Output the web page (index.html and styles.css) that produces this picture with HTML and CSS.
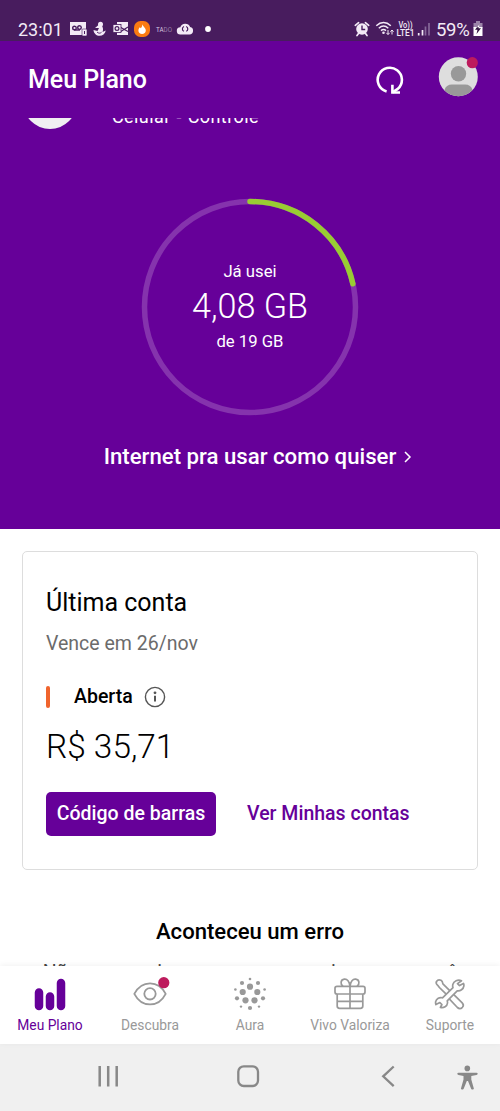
FILE: index.html
```html
<!DOCTYPE html>
<html lang="pt-BR">
<head>
<meta charset="utf-8">
<meta name="viewport" content="width=device-width, initial-scale=1">
<title>Meu Plano</title>
<link rel="stylesheet" href="styles.css">
</head>
<body>
<div class="phone">
  <div class="statusbar">
    <div class="status-left">
      <span class="clock">23:01</span>
      <svg class="notif-icons" width="144" height="20" viewBox="69 19 144 20">
        <!-- voicemail -->
        <path d="M70 22h16v8h-3v5H70z" fill="#f3eaf6"/>
        <g fill="none" stroke="#481c5e" stroke-width="1.4"><circle cx="74.5" cy="28" r="1.8"/><circle cx="79.5" cy="27.6" r="1.8"/><path d="M74 30h6"/></g>
        <rect x="82" y="29" width="5" height="7" rx="1" fill="#f3eaf6" stroke="#481c5e" stroke-width=".6"/><path d="M84.5 31v3" stroke="#481c5e"/>
        <!-- figure -->
        <circle cx="100.500" cy="24.300" r="2.500" fill="#f3eaf6"/>
        <path d="M98.500 25L95 28h4l-1.500 3L93.500 30c.2 3.500 3 5.800 6 5.800 3.200 0 5.500-1.800 6.300-5.300l-3.300 1.500c1-2.400.5-4.500-.5-6z" fill="#f3eaf6"/>
        <path d="M97 32c1.500 1.500 3 1.500 4.500.3" fill="none" stroke="#481c5e" stroke-width=".9"/>
        <!-- mail -->
        <path d="M117 22h11v13h-11z" fill="#f3eaf6"/><path d="M120 27l8 4.500M128 27l-8 5" stroke="#481c5e" stroke-width="1.200"/>
        <rect x="113" y="24.500" width="8" height="8" fill="#f3eaf6" stroke="#481c5e" stroke-width=".8"/><circle cx="117" cy="28.500" r="1.900" fill="none" stroke="#481c5e" stroke-width="1.200"/>
        <!-- flame -->
        <rect x="134" y="21" width="16" height="16" rx="6.500" fill="#fa7b11"/>
        <path d="M142.400 24.300c.4 2.200 3.400 3.500 3.400 6.200 0 2-1.600 3.500-3.700 3.500-2.100 0-3.700-1.400-3.700-3.400 0-1.700.9-2.500 1.500-3.300l.9 1c.9-.9 1.400-2 1.600-4z" fill="#fff"/>
        <text x="156" y="31.500" class="tado" textLength="16" lengthAdjust="spacingAndGlyphs">TA<tspan class="dim">DO</tspan></text>
        <!-- cloud sync -->
        <path d="M180.500 34.500a3.600 3.600 0 0 1-.2-7.200 5.200 5.200 0 0 1 9.800-.3 3.800 3.800 0 0 1-.6 7.500z" fill="#f3eaf6"/>
        <path d="M184 26.500a2.600 2.600 0 0 0 0 4.800M186.200 31.300a2.600 2.600 0 0 0 0-4.800" fill="none" stroke="#481c5e" stroke-width="1.200"/>
        <circle cx="208" cy="29" r="2.900" fill="#fff"/>
      </svg>
    </div>
    <div class="status-right">
      <svg width="77" height="20" viewBox="354 19 77 20">
        <!-- alarm -->
        <circle cx="362" cy="29" r="5.800" fill="#f3eaf6"/>
        <path d="M362 25.500v4h3.200" fill="none" stroke="#481c5e" stroke-width="1.400"/>
        <path d="M355.300 25.300l3.300-2.600M368.700 25.300l-3.300-2.600M358.500 33.500l-1.500 2M365.500 33.500l1.500 2" stroke="#f3eaf6" stroke-width="1.700" stroke-linecap="round"/>
        <!-- wifi -->
        <g fill="none" stroke="#f3eaf6" stroke-width="1.500"><path d="M376.300 25.800c4.500-4.300 10-4.300 14.500 0M378.800 28.300c3-2.800 6.500-2.800 9.500 0M381 30.600c1.500-1.400 3.500-1.400 5 0"/></g>
        <circle cx="383.500" cy="32.700" r="1.300" fill="#f3eaf6"/>
        <path d="M388 30v4.500m-1.700-1.700l1.700 1.700 1.700-1.700M392 34.500V30m-1.600 1.700L392 30l1.600 1.700" fill="none" stroke="#f3eaf6" stroke-width="1"/>
        <text x="398.500" y="28.300" class="lte" textLength="14" lengthAdjust="spacingAndGlyphs">Vo))</text>
        <text x="396.500" y="36.200" class="lte" textLength="18" lengthAdjust="spacingAndGlyphs">LTE1</text>
        <path d="M418.700 33v2.500M422.500 30v5.500" stroke="#f3eaf6" stroke-width="1.700"/>
        <path d="M425.500 26.500v9M429 23v12.500" stroke="#866799" stroke-width="1.700"/>
      </svg>
      <span class="battery-text">59%</span>
      <svg width="10" height="16" viewBox="0 0 10 16">
        <path d="M3 0h4v2h2.500v5H.5V2H3z" fill="#9b83a8"/><path d="M.5 6h9v9h-9z" fill="#fff"/>
        <path d="M6.500 3L2 8.700h2.500L3.500 13 8 7.300H5.500z" fill="#31133f"/><path d="M6.500 3L4 6.200h2L6.500 3z" fill="#fff"/>
      </svg>
    </div>
  </div>

  <header class="header">
    <h1>Meu Plano</h1>
    <svg class="refresh" width="30" height="30" viewBox="375 65 30 30" fill="none" stroke="#fff" stroke-width="2.600">
      <path d="M386.600 91.500A12.100 12.100 0 1 1 397.800 88.900L392.400 92.300" /><path d="M392.400 84.800v7.700h7.600"/>
    </svg>
    <svg class="avatar" width="42" height="42" viewBox="437 56 42 42">
      <clipPath id="face"><circle cx="458.300" cy="76.800" r="19.500"/></clipPath>
      <circle cx="458.300" cy="76.800" r="19.500" fill="#dedede"/>
      <g clip-path="url(#face)" fill="#999"><circle cx="458.500" cy="73.700" r="7.700"/><path d="M444.500 97v-7q1.500-5.500 7.500-5.500h13q6 0 7.500 5.500v7z"/></g>
      <circle cx="472.300" cy="62.700" r="5.600" fill="#bd1b5d"/>
    </svg>
  </header>

  <main class="content">
    <section class="usage">
      <div class="line">
        <span class="line-avatar"></span>
        <span class="line-name">Celular - Controle</span>
      </div>
      <div class="gauge">
        <svg width="218" height="218" viewBox="-109 -109 218 218" fill="none" stroke-width="5.500">
          <circle r="105.500" stroke="#8533ad"/>
          <path d="M0-105.500A105.500 105.500 0 0 1 102.900-23.200" stroke="#99cc33" stroke-linecap="round"/>
        </svg>
        <div class="gauge-text">
          <span class="used-label">Já usei</span>
          <span class="used">4,08 GB</span>
          <span class="total">de 19 GB</span>
        </div>
      </div>
      <a class="usage-link"><span>Internet pra usar como quiser</span>
        <svg width="8" height="12" viewBox="0 0 8 12" fill="none" stroke="#fff" stroke-width="1.500"><path d="M1 1l5 5-5 5"/></svg>
      </a>
    </section>

    <section class="card">
      <h2>Última conta</h2>
      <p class="due">Vence em 26/nov</p>
      <div class="state">
        <span class="mark"></span><strong>Aberta</strong>
        <svg width="22" height="22" viewBox="0 0 22 22" fill="none" stroke="#555"><circle cx="11" cy="11" r="9.600" stroke-width="1.400"/><path d="M11 9.800v5.700" stroke-width="2"/><circle cx="11" cy="6.800" r="1.400" fill="#555" stroke="none"/></svg>
      </div>
      <p class="price">R$ 35,71</p>
      <div class="actions"><a class="button"><span>Código de barras</span></a><a class="link">Ver Minhas contas</a></div>
    </section>

    <section class="error">
      <h3>Aconteceu um erro</h3>
      <p>Não conseguimos acessar o serviço como você</p>
    </section>
  </main>

  <nav class="tabs">
    <a class="tab active">
      <svg width="40" height="40" viewBox="30 974 40 40" stroke="#660099" stroke-width="8.500" stroke-linecap="round"><path d="M39 992.500v13.500M50 996.500v9.500M61 983v23"/></svg>
      <span>Meu Plano</span>
    </a>
    <a class="tab">
      <svg width="40" height="40" viewBox="130 974 40 40" fill="none" stroke="#999" stroke-width="1.800"><path d="M134.300 993.800c7.500-14 24-14 31.400 0-7.400 14.200-23.900 14.200-31.400 0z" stroke-linejoin="round"/><circle cx="150" cy="993.800" r="5.700"/><circle cx="163.800" cy="982.700" r="5.600" fill="#bd1b5d" stroke="none"/></svg>
      <span>Descubra</span>
    </a>
    <a class="tab">
      <svg width="40" height="40" viewBox="230 974 40 40" fill="#999"><circle cx="250" cy="986.700" r="3.100"/><circle cx="242.700" cy="992" r="3.100"/><circle cx="257.300" cy="992" r="3.100"/><circle cx="245.500" cy="1000.300" r="3.100"/><circle cx="254.500" cy="1000.300" r="3.100"/><circle cx="242" cy="983" r="2.100"/><circle cx="258" cy="983" r="2.100"/><circle cx="237" cy="998.300" r="2.100"/><circle cx="263" cy="998.300" r="2.100"/><circle cx="250" cy="1008" r="2.100"/><circle cx="250" cy="979" r="1.300"/><circle cx="235.400" cy="989.500" r="1.300"/><circle cx="264.600" cy="989.500" r="1.300"/><circle cx="241" cy="1006.600" r="1.200"/><circle cx="259" cy="1006.600" r="1.200"/></svg>
      <span>Aura</span>
    </a>
    <a class="tab">
      <svg width="40" height="40" viewBox="330 974 40 40" fill="none" stroke="#999" stroke-width="1.700"><rect x="335" y="986.300" width="30" height="7.700" rx="2"/><path d="M337.200 994v12q0 2.300 2.300 2.300h21q2.300 0 2.300-2.300v-12M350 986v22M337.500 1001.300h25"/><path d="M350 986.300c-.4-5-3-7.500-5.700-7.100-3.800.5-4.300 4.800-1.300 7.100M350 986.300c.4-5 3-7.500 5.700-7.100 3.800.5 4.300 4.800 1.300 7.100"/></svg>
      <span>Vivo Valoriza</span>
    </a>
    <a class="tab">
      <svg width="40" height="40" viewBox="430 974 40 40" fill="#fff" stroke="#999" stroke-width="1.700" stroke-linejoin="round">
        <path d="M436.500 981.500c1-1.600 3-2 4.500-1.200 1.300.7 1.600 1.500 1.900 3.500l19.300 19c1.500 1.600 1.300 3.300.2 4.500-1.400 1.400-3.500 1.500-5 .2l-10.500-11.200-1.500-3-6-5.800-1.700-2.200c-1.300-1-2-2.200-1.200-3.800z"/>
        <path d="M461.500 980.700c-3.800-1.500-7.700.3-8.700 3.700-.3 1.200-.2 2.300.2 3.300l-10.500 10.100c-3-.9-6.200.8-6.800 3.800-.3 1-.2 2 .2 3l4-2 2 1.900-1.500 3c3.400.8 6.800-1.200 7.100-4.500.1-.8 0-1.500-.3-2.200l10-10c3 .5 6.300-1.600 6.700-4.900.1-.9 0-1.700-.4-2.500l-4 2.200-2-2z"/>
      </svg>
      <span>Suporte</span>
    </a>
  </nav>

  <div class="sysbar">
    <svg width="22" height="24" viewBox="97 1064 22 24" stroke="#888" stroke-width="2.500"><path d="M99.700 1066v20.500M108.200 1066v20.500M116.700 1066v20.500"/></svg>
    <svg width="24" height="24" viewBox="236 1064 24 24" fill="none" stroke="#888" stroke-width="2.300"><rect x="238.300" y="1066.300" width="19.700" height="19.700" rx="5.500"/></svg>
    <svg width="14" height="24" viewBox="381 1064 14 24" fill="none" stroke="#888" stroke-width="2.300"><path d="M393.700 1066.500l-10.500 9.800 10.500 9.800"/></svg>
    <svg width="22" height="26" viewBox="456 1064 22 26" fill="#888"><circle cx="467.300" cy="1068.400" r="2.800"/><path d="M458.500 1072.800h18q1.200 0 1.200 1t-1.200 1.200l-5.200.9v3.500l2.600 9.300q-1.500 1.700-2.800 0l-3.100-7.700h-1.200l-3.100 7.700q-1.400 1.700-2.800 0l2.600-9.300v-3.500l-5-.9q-1.200-.2-1.200-1.200t1.200-1z"/></svg>
  </div>
</div>
</body>
</html>
```

FILE: styles.css
```css
* { box-sizing: border-box; margin: 0; padding: 0; }
body { background: #fff; font-family: Roboto, "Noto Sans", sans-serif; }
svg { display: block; flex: none; }
.phone { width: 500px; height: 1111px; display: flex; flex-direction: column; overflow: hidden; color: #000; }

.statusbar { flex: none; height: 41px; padding: 19px 17px 0 18px; background: #481c5e; color: #f3eaf6; display: flex; justify-content: space-between; }
.status-left, .status-right { display: flex; height: 20px; align-items: center; }
.clock { width: 51px; font-size: 18px; line-height: 20px; padding-top: 2px; }
.tado { font: 7.5px Roboto, sans-serif; fill: #d8c9e0; }
.dim { fill: #9a82aa; }
.lte { font: 500 8.5px Roboto, sans-serif; fill: #f3eaf6; }
.battery-text { margin-left: 5px; width: 37px; font-size: 18.500px; line-height: 20px; padding-top: 2px; letter-spacing: -.3px; }

.header { flex: none; height: 77px; padding: 15px 21px 0 28px; background: #660099; color: #fff; display: flex; align-items: flex-start; }
.header h1 { flex: 1; font-size: 25px; font-weight: 500; line-height: 48px; letter-spacing: -.05px; }
.refresh { margin: 9px 32px 0 0; }

.content { flex: 1; min-height: 0; overflow: hidden; }
.usage { height: 411px; background: #660099; color: #fff; display: flex; flex-direction: column; align-items: center; overflow: hidden; }
.line { align-self: stretch; flex: none; display: flex; align-items: flex-end; height: 54px; margin-top: -43px; padding-left: 23px; }
.line-avatar { width: 54px; height: 54px; border-radius: 50%; background: #f0eef2; }
.line-name { margin: 0 0 2px 35px; font-size: 18px; line-height: 20px; letter-spacing: .4px; word-spacing: 1px; }
.gauge { margin-top: 69px; display: grid; place-items: center; }
.gauge > * { grid-area: 1 / 1; }
.gauge-text { display: flex; flex-direction: column; align-items: center; white-space: nowrap; }
.used-label { font-size: 16.700px; line-height: 22px; }
.used { font-size: 34.200px; font-weight: 300; line-height: 44px; margin: 1px 0 3px; }
.total { font-size: 16.700px; line-height: 22px; }
.usage-link { margin: 26px 0 0 16px; display: flex; align-items: center; gap: 8px; font-size: 22.200px; font-weight: 500; line-height: 28px; }
.usage-link svg { margin-top: 2px; }

.card { width: 456px; height: 319px; margin: 22px 0 0 22px; border: 1px solid #ddd; border-radius: 5px; padding: 36px 23px 0; }
.card h2 { font-size: 25px; font-weight: 400; line-height: 30px; }
.due { margin-top: 14px; font-size: 19.500px; line-height: 24px; color: #6b6b6b; }
.state { margin-top: 29px; height: 24px; display: flex; align-items: center; font-size: 19.500px; }
.state strong { width: 58px; margin: 0 12px 0 24px; font-weight: 500; line-height: 24px; }
.mark { width: 4px; height: 22px; border-radius: 2px; background: #f0642d; }
.price { margin-top: 18px; font-size: 33.400px; font-weight: 300; line-height: 40px; }
.actions { margin-top: 25px; display: flex; align-items: center; gap: 31px; font-size: 19.500px; font-weight: 500; line-height: 24px; }
.button { width: 170px; height: 44px; padding-bottom: 1px; border-radius: 5px; background: #660099; color: #fff; display: flex; align-items: center; justify-content: center; white-space: nowrap; }
.link { color: #660099; }

.error { margin-top: 48px; text-align: center; white-space: nowrap; }
.error h3 { font-size: 22.100px; font-weight: 500; line-height: 26px; }
.error p { margin-top: 17px; font-size: 19.500px; line-height: 24px; color: #444; }

.tabs { flex: none; height: 78px; background: #fff; box-shadow: 0 -1px 6px rgba(0,0,0,.06); display: grid; grid-template-columns: repeat(5, 1fr); position: relative; }
.tab { padding-top: 8px; display: flex; flex-direction: column; align-items: center; color: #999; font-size: 13.800px; line-height: 18px; }
.tab span { margin-top: 2px; }
.tab.active { color: #660099; }

.sysbar { flex: none; height: 67px; background: #f0f0f0; padding: 20px 22px 0 97px; display: grid; grid-template-columns: 139px 145px 75px 22px; }
```
